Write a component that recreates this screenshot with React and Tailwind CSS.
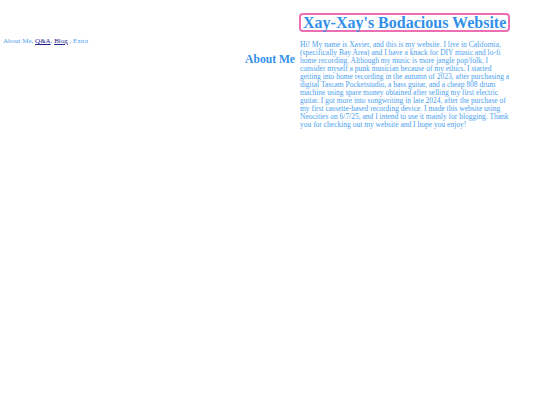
export default function App() {
  return (
    <div className="w-[540px] h-[405px] bg-white font-['Liberation_Serif',Georgia,serif] text-[#4a9ff0]">
      <div className="flex pt-[13px] pl-[299px]">
        <h1 className="border-2 border-[#ec6fb4] rounded-[4px] px-[2px] h-[19px] leading-[15px] text-[16px] font-bold text-[#3290ea] whitespace-nowrap">
          Xay-Xay's Bodacious Website
        </h1>
      </div>
      <div className="grid grid-cols-[300px_210px]">
        <div className="flex flex-col">
          <nav className="pl-[3px] pt-[5px] text-[7px] leading-[8px]">
            About Me, <a href="#" className="text-[#23238f] underline">Q&amp;A</a>,{" "}
            <a href="#" className="text-[#23238f] underline">Blog</a> , Extra
          </nav>
          <h2 className="mt-[8px] pr-[5px] text-right text-[11.6px] leading-[14px] font-bold text-[#3290ea]">
            About Me
          </h2>
        </div>
        <p className="pt-[9px] text-[7.5px] leading-[8px]">
          Hi! My name is Xavier, and this is my website. I live in California, (specifically Bay Area) and I have a knack for DIY music and lo-fi home recording. Although my music is more jangle pop/folk, I consider myself a punk musician because of my ethics. I started getting into home recording in the autumn of 2023, after purchasing a digital Tascam Pocketstudio, a bass guitar, and a cheap 808 drum machine using spare money obtained after selling my first electric guitar. I got more into songwriting in late 2024, after the purchase of my first cassette-based recording device. I made this website using Neocities on 6/7/25, and I intend to use it mainly for blogging. Thank you for checking out my website and I hope you enjoy!
        </p>
      </div>
    </div>
  );
}
